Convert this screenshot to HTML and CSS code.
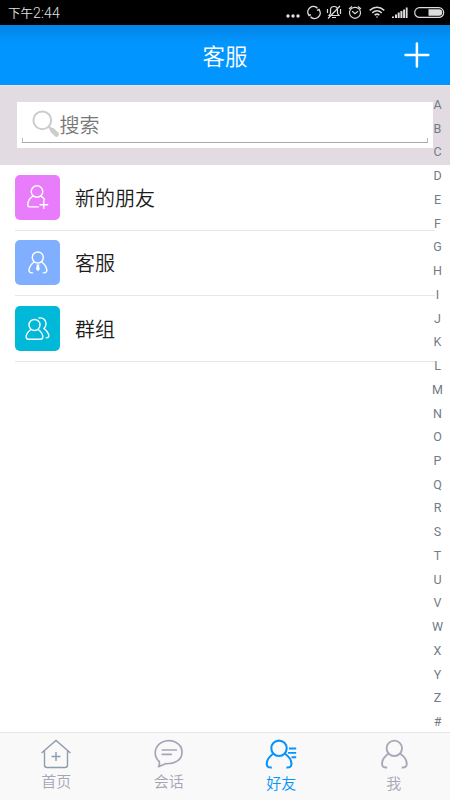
FILE: index.html
```html
<!DOCTYPE html>
<html lang="zh-CN">
<head>
<meta charset="utf-8">
<title>客服</title>
<link rel="stylesheet" href="styles.css">
</head>
<body>
<div class="phone">
  <div class="status">
    <span class="time">下午<span class="digits">2:44</span></span>
    <div class="status-icons">
      <svg width="15" height="25" viewBox="0 0 15 25" fill="#e2e2e2"><circle cx="2" cy="16" r="1.7"/><circle cx="7" cy="16" r="1.7"/><circle cx="12" cy="16" r="1.7"/></svg>
      <svg width="14" height="25" viewBox="0 0 14 25" fill="none" stroke="#ddd" stroke-width="1.4"><path d="M1.800 15.200A5.600 5.600 0 0 1 10.500 8.200M12.200 9.800A5.600 5.600 0 0 1 3.500 16.800M1 13.500l1 2 2-.8M13 11.500l-1-2-2 .8"/></svg>
      <svg width="16" height="25" viewBox="0 0 16 25" fill="none" stroke="#ddd" stroke-width="1.2"><path d="M3 15.500l1.500-2V10a3.500 3.500 0 0 1 7 0v3.500l1.500 2zM6 17.500h4M14 6L2 18.500M1.500 9v4M14.500 9v5"/></svg>
      <svg width="14" height="25" viewBox="0 0 14 25" fill="none" stroke="#ddd" stroke-width="1.2"><circle cx="7" cy="12.800" r="5.500"/><path d="M1 9l3-2.500M13 9l-3-2.500M4.200 11.300L7 13.800l3-2.500"/></svg>
      <svg width="16" height="25" viewBox="0 0 16 25" fill="none" stroke="#ddd" stroke-width="1.5"><path d="M.7 10.300q7.300-6 14.600 0M3.200 12.800q4.800-4 9.600 0M5.600 15.100q2.400-2 4.800 0"/><circle cx="8" cy="17" r=".8" fill="#ddd" stroke="none"/></svg>
      <svg width="16" height="25" viewBox="0 0 16 25" fill="#ddd"><path d="M0 18v-1.500h2V18zM3 18v-3.500h2V18zM5.700 18v-5.500h2V18zM8.400 18v-7h2v7zM11.100 18V9.500h2V18zM13.800 18V7.500h1.800V18z"/></svg>
      <svg width="31" height="25" viewBox="0 0 31 25"><rect x=".7" y="7.700" width="29" height="9.700" rx="4.850" fill="none" stroke="#ddd" stroke-width="1.200"/><path d="M14.500 9.300H25a3.250 3.250 0 0 1 0 6.500H14.500z" fill="#ddd"/></svg>
    </div>
  </div>
  <header class="header">
    <h1 class="title">客服</h1>
    <svg class="add" width="26" height="26" viewBox="0 0 26 26" stroke="#fff" stroke-width="2.500" stroke-linecap="round"><path d="M1.500 13h22.800M12.900 1.600v22.800"/></svg>
  </header>
  <main class="content">
    <div class="search-area">
      <div class="search">
        <div class="field">
          <svg width="30" height="30" viewBox="0 0 30 30"><circle cx="11.300" cy="11.300" r="8.900" fill="none" stroke="#ccc" stroke-width="2"/><path d="M17.700 17.700l3 3" stroke="#ccc" stroke-width="2.500"/><path d="M21.500 21.500l4 3.800" stroke="#ccc" stroke-width="5" stroke-linecap="round"/></svg>
          <span class="placeholder">搜索</span>
        </div>
      </div>
    </div>
    <ul class="list">
      <li class="row">
        <span class="tile pink"><svg width="45" height="45" viewBox="0 0 45 45"><circle cx="22" cy="16.500" r="5.800"/><path d="M18 21.200c-3.500 2-5.200 5.300-5.200 8.700q0 2 2.300 2h8.400M26 21.200q2.200 1.300 3.500 3.300M28.800 25.800v7.700M25 29.700h7.700"/></svg></span>
        <span>新的朋友</span>
      </li>
      <li class="row">
        <span class="tile blue"><svg width="45" height="45" viewBox="0 0 45 45"><circle cx="22.800" cy="17.500" r="5.500"/><path d="M19 22c-4 3-5.700 7.500-4.700 9.700q.8 1.300 3.300 1.200M26.800 22c4 3 5.700 7.500 4.700 9.700q-.8 1.300-3.300 1.200"/><path class="solid" d="M21.300 24.500h3.200l-.5 1.800.9 2.700-2 2.300-2-2.300.9-2.700z"/></svg></span>
        <span>客服</span>
      </li>
      <li class="row">
        <span class="tile teal"><svg width="45" height="45" viewBox="0 0 45 45"><circle cx="19.500" cy="19" r="5.500"/><path d="M16 23.500c-3.200 2-4.800 4.800-4.800 7.500 0 1.500.8 2.200 2.300 2.200h12c1.500 0 2.300-.7 2.300-2.200 0-2.700-1.600-5.500-4.800-7.500M24 12c6.500-.8 9 6 5 10.500 4.500 3.500 5.800 7.500 4 8.900l-1.700.5"/></svg></span>
        <span>群组</span>
      </li>
    </ul>
    <div class="index">
      <span>A</span><span>B</span><span>C</span><span>D</span><span>E</span><span>F</span><span>G</span><span>H</span><span>I</span><span>J</span><span>K</span><span>L</span><span>M</span><span>N</span><span>O</span><span>P</span><span>Q</span><span>R</span><span>S</span><span>T</span><span>U</span><span>V</span><span>W</span><span>X</span><span>Y</span><span>Z</span><span>#</span>
    </div>
  </main>
  <nav class="tabs">
    <div class="tab">
      <svg width="32" height="32" viewBox="0 0 32 32" stroke="#8d9dab" stroke-width="1.400"><path d="M1.500 15L16 2.500 30.500 15M4.500 13V27q0 2.500 2.500 2.500h18q2.500 0 2.500-2.500V13M16 14v9M11.500 18.500h9"/></svg>
      <span>首页</span>
    </div>
    <div class="tab">
      <svg width="32" height="32" viewBox="0 0 32 32" stroke="#a5a5b8" stroke-width="1.700"><path d="M6.200 23.500C0 18 1.200 8 9 4.200c8.500-3.800 20 .1 20 10 0 8-7.500 12-16.500 11.500L5.500 28.700q1.500-2 .7-5.200zM9.300 12h14M9.300 16.300h9" stroke-linejoin="round" stroke-linecap="round"/></svg>
      <span>会话</span>
    </div>
    <div class="tab active">
      <svg width="32" height="32" viewBox="0 0 32 32" stroke="#0894fb" stroke-width="2.100"><circle cx="14" cy="10.300" r="7.700"/><path d="M8.500 15.500C3.500 19 1.500 23 1.800 26.500q.3 3.300 5 3M19.700 15.500c5 3.500 7 7.500 6.700 11q-.3 3.300-5 3"/><path d="M24 10.500h7.200M23 14.900h8.200M26.500 19.300h4.700" stroke-width="1.900"/></svg>
      <span>好友</span>
    </div>
    <div class="tab">
      <svg width="32" height="32" viewBox="0 0 32 32" stroke="#a8a8b8" stroke-width="1.900"><circle cx="16.300" cy="10.300" r="7.700"/><path d="M10.600 15.500C5.600 19 3.800 23 4.100 26.500q.3 3.300 5 3M22 15.500c5 3.500 7 7.500 6.700 11q-.3 3.300-5 3"/></svg>
      <span>我</span>
    </div>
  </nav>
</div>
</body>
</html>
```
FILE: styles.css
```css
* { box-sizing: border-box; }
body { margin: 0; font-family: "Noto Sans CJK SC", sans-serif; font-weight: 350; background: #fff; }
svg { display: block; flex: none; }
.phone { width: 450px; height: 800px; display: flex; flex-direction: column; overflow: hidden; }
.status { height: 25px; flex: none; background: #000; color: #e0e0e0; display: flex; align-items: center; justify-content: space-between; padding: 0 5px 0 8px; }
.time { font-size: 12.500px; line-height: 25px; padding-top: 1px; }
.digits { font-family: Roboto, sans-serif; font-size: 14px; letter-spacing: .2px; }
.status-icons { display: flex; gap: 6px; }
.status-icons svg:nth-child(2) { margin-right: -.5px; }
.status-icons svg:nth-child(4) { margin-right: .5px; }
.status-icons svg:nth-child(5) { margin-right: 1.500px; }
.header { height: 60px; flex: none; display: grid; grid-template-columns: 1fr auto 1fr; align-items: center; background: linear-gradient(#0384e5, #0195ff 18px); color: #fff; }
.title { grid-column: 2; margin: 0; font-size: 22.500px; font-weight: 350; line-height: 60px; }
.add { justify-self: end; margin-right: 20px; }
.content { position: relative; flex: 1; min-height: 0; }
.search-area { height: 80px; background: #e2dbe2; border-top: 1px solid #f5dfe2; padding: 16px 17px; }
.search { height: 46px; background: #fff; padding: 0 5px 5px; }
.field { position: relative; height: 41px; border-bottom: 1px solid #aaa; display: flex; align-items: center; padding-left: 9px; }
.field svg { margin-top: 3px; }
.field::before, .field::after { content: ""; position: absolute; bottom: 0; width: 1px; height: 4px; background: #bbb; }
.field::before { left: 0; }
.field::after { right: 0; }
.placeholder { font-size: 20px; line-height: 30px; margin-left: -1.500px; padding-top: 5px; color: #777; }
.list { list-style: none; margin: 0; padding: .4px 15px 0; }
.row { height: 65.400px; border-bottom: 1px solid #e6e6e6; display: flex; align-items: center; gap: 15px; font-size: 20px; color: #1c1c1c; }
.tile { width: 45px; height: 45px; border-radius: 5px; }
.tile svg { fill: none; stroke: #fff; stroke-width: 1.400; stroke-linecap: round; }
.tile .solid { fill: #fff; stroke: none; }
.pink { background: #e87cfa; }
.blue { background: #80afff; }
.teal { background: #00b8d8; }
.index { position: absolute; top: 8px; right: 0; width: 25px; display: flex; flex-direction: column; text-align: center; font: 400 12.500px/23.730px Roboto, sans-serif; color: #747b84; }
.tabs { height: 68px; flex: none; display: grid; grid-template-columns: repeat(4, 1fr); background: #f9f9f9; border-top: 1px solid #e7e7e7; }
.tab { display: flex; flex-direction: column; align-items: center; padding-top: 5px; font-size: 15px; line-height: 22px; color: #a5a5b8; }
.tab svg { fill: none; }
.tab:nth-child(n+3) span { padding-top: 2px; }
.active { color: #0894fb; }
```
